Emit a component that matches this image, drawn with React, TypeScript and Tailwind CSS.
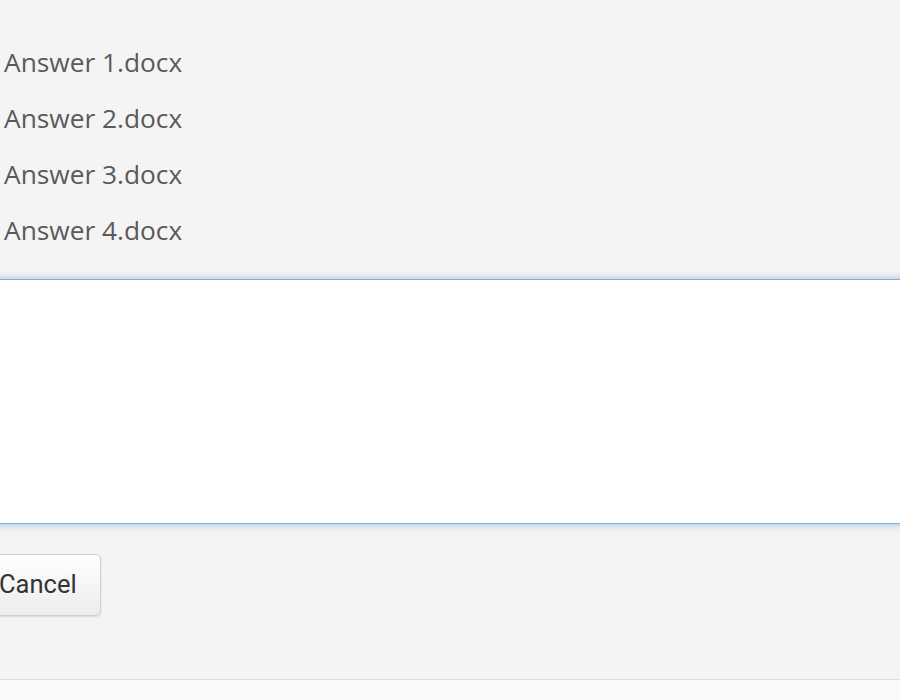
import React from 'react';

const files = ['Answer 1.docx', 'Answer 2.docx', 'Answer 3.docx', 'Answer 4.docx'];

export default function App() {
  return (
    <div className="w-[900px] h-[700px] overflow-hidden bg-[#f4f4f4] flex flex-col" style={{ fontFamily: '"Open Sans", sans-serif' }}>
      {/* Attached files */}
      <ul className="pt-[34px] pl-[4px]">
        {files.map(f => (
          <li key={f} className="h-[56px] leading-[56px] text-[26.3px] text-[#5a5a5a]">
            {f}
          </li>
        ))}
      </ul>

      {/* Answer box */}
      <div className="mt-[21px] -mx-[10px]">
        <textarea
          className="block w-full h-[245px] bg-white border border-[#7fb0d8] border-t-[#8fa9bd] shadow-[0_0_8px_rgba(110,165,220,0.7)] resize-none outline-none"
        />
      </div>

      {/* Actions */}
      <div className="mt-[30px]">
        <button
          className="-ml-[26px] h-[62px] pl-[24px] pr-[23px] rounded-[5px] border border-[#cfcfcf] bg-gradient-to-b from-white to-[#ececec] shadow-[0_1px_2px_rgba(0,0,0,0.12)] text-[25.5px] text-[#333] leading-none"
          style={{ fontFamily: 'Roboto, sans-serif' }}
        >
          Cancel
        </button>
      </div>

      <div className="flex-1" />
      <div className="h-[21px] border-t border-[#dcdcdc] bg-[#fafafa]" />
    </div>
  );
}
